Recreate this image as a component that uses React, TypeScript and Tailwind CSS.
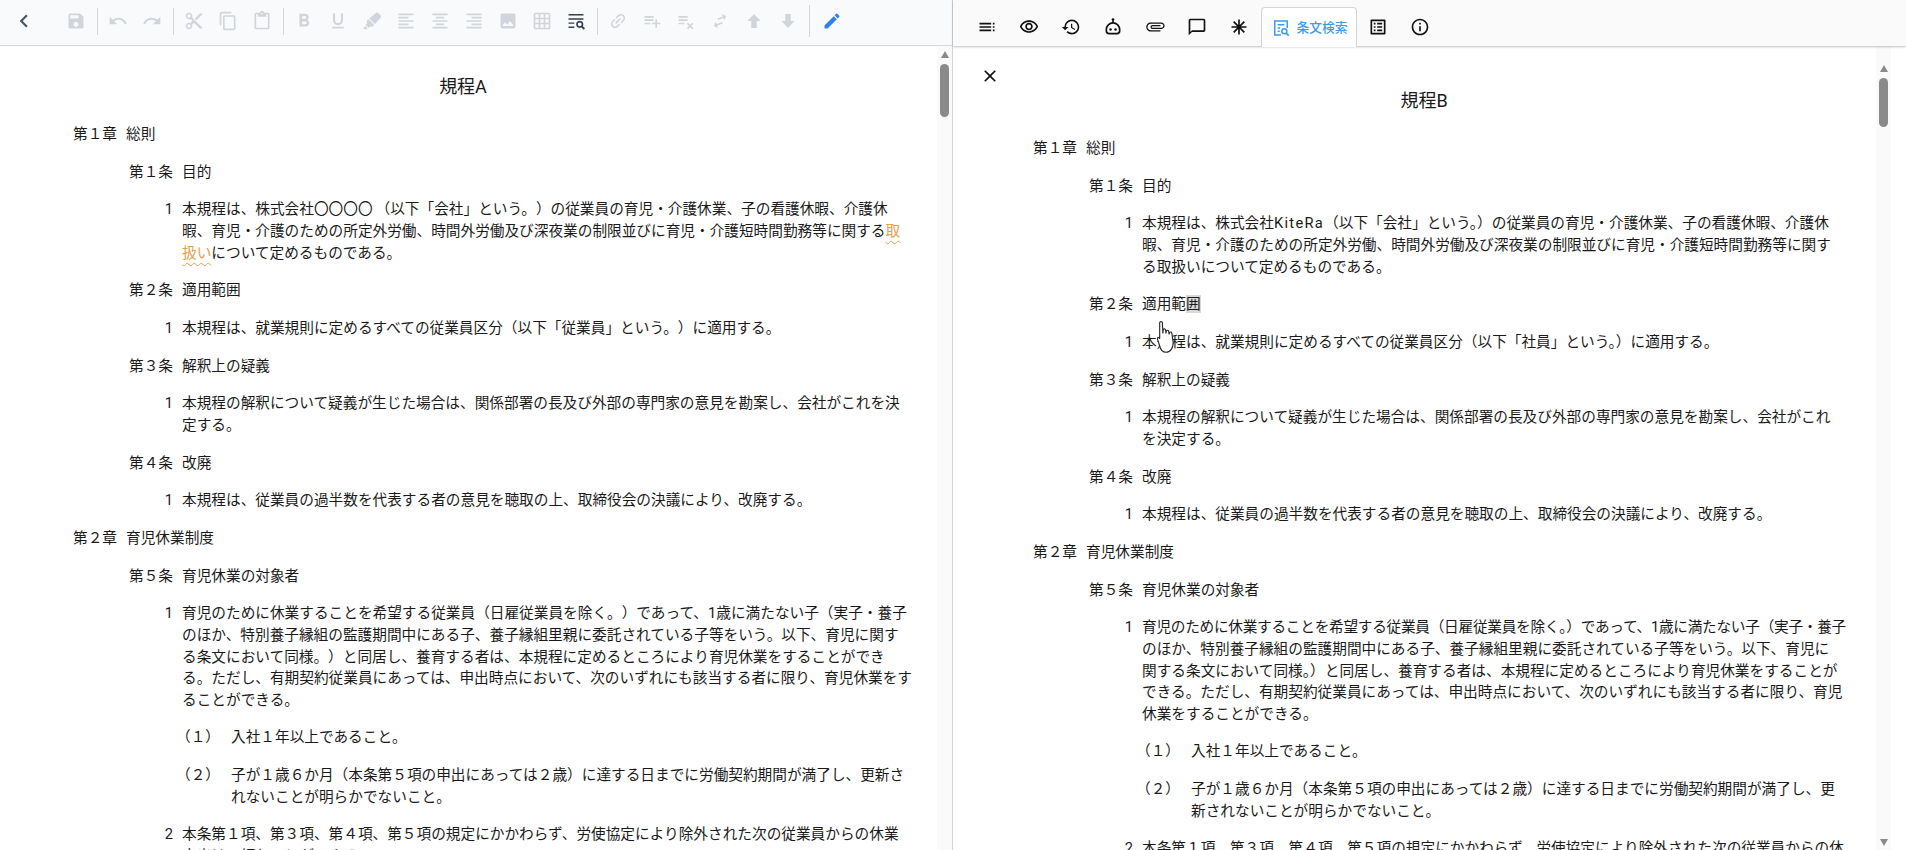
import type { ReactNode } from "react";
import { FaHighlighter } from "react-icons/fa";
import {
  MdChevronLeft,
  MdClose,
  MdContentCopy,
  MdContentCut,
  MdContentPaste,
  MdEdit,
  MdFormatAlignCenter,
  MdFormatAlignLeft,
  MdFormatAlignRight,
  MdFormatBold,
  MdFormatUnderlined,
  MdGridOn,
  MdHistory,
  MdImage,
  MdInfoOutline,
  MdLink,
  MdListAlt,
  MdOutlineAttachment,
  MdOutlineChatBubbleOutline,
  MdOutlineVisibility,
  MdPlaylistAdd,
  MdPlaylistRemove,
  MdRedo,
  MdSave,
  MdSwapHoriz,
  MdToc,
  MdUndo,
} from "react-icons/md";

type Block =
  | { kind: "chapter" | "article"; label: string; text: ReactNode }
  | { kind: "para" | "sub"; label: string; lines: ReactNode[] };

const SQUIGGLE =
  "underline decoration-wavy decoration-1 underline-offset-[4px] [text-decoration-skip-ink:none] decoration-[#e8a04c] text-[#e8a04c]";

const DOC_A: Block[] = [
  { kind: "chapter", label: "第１章", text: "総則" },
  { kind: "article", label: "第１条", text: "目的" },
  {
    kind: "para",
    label: "1",
    lines: [
      <>
        本規程は、株式会社〇〇〇〇<span className="ml-[3px]">（以下「会社」という。）の従業員の育児・介護休業、子の看護休暇、介護休</span>
      </>,
      <>
        暇、育児・介護のための所定外労働、時間外労働及び深夜業の制限並びに育児・介護短時間勤務等に関する<span className={SQUIGGLE}>取</span>
      </>,
      <>
        <span className={SQUIGGLE}>扱い</span>について定めるものである。
      </>,
    ],
  },
  { kind: "article", label: "第２条", text: "適用範囲" },
  { kind: "para", label: "1", lines: ["本規程は、就業規則に定めるすべての従業員区分（以下「従業員」という。）に適用する。"] },
  { kind: "article", label: "第３条", text: "解釈上の疑義" },
  {
    kind: "para",
    label: "1",
    lines: ["本規程の解釈について疑義が生じた場合は、関係部署の長及び外部の専門家の意見を勘案し、会社がこれを決", "定する。"],
  },
  { kind: "article", label: "第４条", text: "改廃" },
  { kind: "para", label: "1", lines: ["本規程は、従業員の過半数を代表する者の意見を聴取の上、取締役会の決議により、改廃する。"] },
  { kind: "chapter", label: "第２章", text: "育児休業制度" },
  { kind: "article", label: "第５条", text: "育児休業の対象者" },
  {
    kind: "para",
    label: "1",
    lines: [
      "育児のために休業することを希望する従業員（日雇従業員を除く。）であって、1歳に満たない子（実子・養子",
      "のほか、特別養子縁組の監護期間中にある子、養子縁組里親に委託されている子等をいう。以下、育児に関す",
      "る条文において同様。）と同居し、養育する者は、本規程に定めるところにより育児休業をすることができ",
      "る。ただし、有期契約従業員にあっては、申出時点において、次のいずれにも該当する者に限り、育児休業をす",
      "ることができる。",
    ],
  },
  { kind: "sub", label: "（１）", lines: ["入社１年以上であること。"] },
  {
    kind: "sub",
    label: "（２）",
    lines: ["子が１歳６か月（本条第５項の申出にあっては２歳）に達する日までに労働契約期間が満了し、更新さ", "れないことが明らかでないこと。"],
  },
  {
    kind: "para",
    label: "2",
    lines: ["本条第１項、第３項、第４項、第５項の規定にかかわらず、労使協定により除外された次の従業員からの休業", "申出は、拒むことができる。"],
  },
];

const DOC_B: Block[] = [
  { kind: "chapter", label: "第１章", text: "総則" },
  { kind: "article", label: "第１条", text: "目的" },
  {
    kind: "para",
    label: "1",
    lines: [
      <>
        本規程は、株式会社<span className="tracking-[1.3px]">KiteRa</span>（以下「会社」という。）の従業員の育児・介護休業、子の看護休暇、介護休
      </>,
      "暇、育児・介護のための所定外労働、時間外労働及び深夜業の制限並びに育児・介護短時間勤務等に関す",
      "る取扱いについて定めるものである。",
    ],
  },
  {
    kind: "article",
    label: "第２条",
    text: (
      <>
        適用範<span className="bg-[#d9d9d9]">囲</span>
      </>
    ),
  },
  { kind: "para", label: "1", lines: ["本規程は、就業規則に定めるすべての従業員区分（以下「社員」という。）に適用する。"] },
  { kind: "article", label: "第３条", text: "解釈上の疑義" },
  {
    kind: "para",
    label: "1",
    lines: ["本規程の解釈について疑義が生じた場合は、関係部署の長及び外部の専門家の意見を勘案し、会社がこれ", "を決定する。"],
  },
  { kind: "article", label: "第４条", text: "改廃" },
  { kind: "para", label: "1", lines: ["本規程は、従業員の過半数を代表する者の意見を聴取の上、取締役会の決議により、改廃する。"] },
  { kind: "chapter", label: "第２章", text: "育児休業制度" },
  { kind: "article", label: "第５条", text: "育児休業の対象者" },
  {
    kind: "para",
    label: "1",
    lines: [
      <span className="tracking-[-0.27px]">育児のために休業することを希望する従業員（日雇従業員を除く。）であって、1歳に満たない子（実子・養子</span>,
      "のほか、特別養子縁組の監護期間中にある子、養子縁組里親に委託されている子等をいう。以下、育児に",
      "関する条文において同様。）と同居し、養育する者は、本規程に定めるところにより育児休業をすることが",
      "できる。ただし、有期契約従業員にあっては、申出時点において、次のいずれにも該当する者に限り、育児",
      "休業をすることができる。",
    ],
  },
  { kind: "sub", label: "（１）", lines: ["入社１年以上であること。"] },
  {
    kind: "sub",
    label: "（２）",
    lines: ["子が１歳６か月（本条第５項の申出にあっては２歳）に達する日までに労働契約期間が満了し、更", "新されないことが明らかでないこと。"],
  },
  {
    kind: "para",
    label: "2",
    lines: ["本条第１項、第３項、第４項、第５項の規定にかかわらず、労使協定により除外された次の従業員からの休", "業申出は、拒むことができる。"],
  },
];

function DocBlock({ block }: { block: Block }) {
  if (block.kind === "chapter") {
    return (
      <div className="flex mb-[16.1px] whitespace-nowrap">
        <span className="w-[53px]">{block.label}</span>
        <span>{block.text}</span>
      </div>
    );
  }
  if (block.kind === "article") {
    return (
      <div className="flex mb-[16.1px] pl-14 whitespace-nowrap">
        <span className="w-[53px]">{block.label}</span>
        <span>{block.text}</span>
      </div>
    );
  }
  if (block.kind === "para") {
    return (
      <div className="flex mb-[16.1px] whitespace-nowrap">
        <span className="w-[100px] text-right">{block.label}</span>
        <div className="pl-[9px]">
          {block.lines.map((l, i) => (
            <div key={i}>{l}</div>
          ))}
        </div>
      </div>
    );
  }
  return (
    <div className="flex mb-[16.1px] whitespace-nowrap">
      <span className="w-[158px] pl-[103px]">{block.label}</span>
      <div>
        {block.lines.map((l, i) => (
          <div key={i}>{l}</div>
        ))}
      </div>
    </div>
  );
}

function Scrollbar({ arrowTop, thumb, down }: { arrowTop: string; thumb: string; down?: boolean }) {
  return (
    <div className="w-[15px] shrink-0 h-full bg-[#fafafa] flex flex-col items-center">
      <div className={`w-0 h-0 border-x-[4.5px] border-x-transparent border-b-[7px] border-b-[#8a8a8a] ${arrowTop}`} />
      <div className={`w-[9px] mt-[6px] rounded-full bg-[#8a8a8a] ${thumb}`} />
      {down && <div className="mt-auto mb-[4px] w-0 h-0 border-x-[4.5px] border-x-transparent border-t-[7px] border-t-[#8a8a8a]" />}
    </div>
  );
}

function ToolIcon({ children, className }: { children: ReactNode; className?: string }) {
  return <div className={`w-[34px] h-[34px] flex items-center justify-center ${className ?? "text-[#d1d5db]"}`}>{children}</div>;
}

function Sep({ tall }: { tall?: boolean }) {
  return (
    <div className="w-[8px] flex justify-center">
      <span className={`w-px bg-[#d4d6da] ${tall ? "h-[32px]" : "h-[27px]"}`} />
    </div>
  );
}

function BlockArrow({ down }: { down?: boolean }) {
  return (
    <svg viewBox="0 0 24 24" width={20} height={20} fill="currentColor" className={down ? "rotate-180" : ""}>
      <path d="M12 3.5 20 12h-4.7v8.5H8.7V12H4z" />
    </svg>
  );
}

function SearchLines() {
  return (
    <svg viewBox="0 0 24 24" width={20} height={20} fill="none" stroke="currentColor" strokeWidth="1.7">
      <path d="M3 4.5h18M3 9.5h18M3 14.5h7M3 19.5h7" />
      <circle cx="16.5" cy="16" r="3.3" strokeWidth="2" />
      <path d="m19 18.6 3 3" strokeWidth="2.2" />
    </svg>
  );
}

function LeftToolbar() {
  const size = "w-[20px] h-[20px]";
  return (
    <div className="h-[46px] shrink-0 bg-[#f9fafb] border-b border-[#d4d6da] flex items-center pb-[3px] pl-[7px]">
      <ToolIcon className="text-[#4b5563] mr-[18px]">
        <MdChevronLeft className="w-[26px] h-[26px]" />
      </ToolIcon>
      <ToolIcon><MdSave className={size} /></ToolIcon>
      <Sep />
      <ToolIcon><MdUndo className={size} /></ToolIcon>
      <ToolIcon><MdRedo className={size} /></ToolIcon>
      <Sep />
      <ToolIcon><MdContentCut className={size} /></ToolIcon>
      <ToolIcon><MdContentCopy className={size} /></ToolIcon>
      <ToolIcon><MdContentPaste className={size} /></ToolIcon>
      <Sep />
      <ToolIcon><MdFormatBold className="w-[22px] h-[22px]" /></ToolIcon>
      <ToolIcon><MdFormatUnderlined className={size} /></ToolIcon>
      <ToolIcon><FaHighlighter className="w-[18px] h-[18px]" /></ToolIcon>
      <ToolIcon><MdFormatAlignLeft className={size} /></ToolIcon>
      <ToolIcon><MdFormatAlignCenter className={size} /></ToolIcon>
      <ToolIcon><MdFormatAlignRight className={size} /></ToolIcon>
      <ToolIcon><MdImage className={size} /></ToolIcon>
      <ToolIcon><MdGridOn className={size} /></ToolIcon>
      <ToolIcon className="text-[#374151]"><SearchLines /></ToolIcon>
      <Sep />
      <ToolIcon><MdLink className={`${size} -rotate-45`} /></ToolIcon>
      <ToolIcon><MdPlaylistAdd className={size} /></ToolIcon>
      <ToolIcon><MdPlaylistRemove className={size} /></ToolIcon>
      <ToolIcon><MdSwapHoriz className={`${size} -rotate-[20deg]`} /></ToolIcon>
      <ToolIcon><BlockArrow /></ToolIcon>
      <ToolIcon><BlockArrow down /></ToolIcon>
      <Sep tall />
      <ToolIcon className="text-[#2f80ed] ml-[2px]"><MdEdit className={size} /></ToolIcon>
    </div>
  );
}

function RobotIcon() {
  return (
    <svg viewBox="0 0 24 24" width={20} height={20} fill="none" stroke="currentColor" strokeWidth="2">
      <circle cx="12" cy="3" r="1.6" fill="currentColor" stroke="none" />
      <path d="M12 4v3" />
      <path d="M4 16.5v-1.5a8 8 0 0 1 16 0v1.500a3.500 3.500 0 0 1-3.500 3.500h-9a3.500 3.500 0 0 1-3.500-3.500z" />
      <circle cx="9" cy="15" r="1.5" fill="currentColor" stroke="none" />
      <circle cx="15" cy="15" r="1.5" fill="currentColor" stroke="none" />
    </svg>
  );
}

function StarIcon() {
  return (
    <svg viewBox="0 0 24 24" width={20} height={20} fill="none" stroke="currentColor" strokeWidth="2">
      <path d="M12 3v18M3 12h18M5.600 5.600l12.800 12.800M18.400 5.600 5.600 18.400" />
    </svg>
  );
}

function FindIcon() {
  return (
    <svg viewBox="0 0 24 24" width={20} height={20} fill="none" stroke="currentColor" strokeWidth="1.8">
      <path d="M12 20.500H4.500v-17h15V12" />
      <path d="M8 8h8M8 12h3M8 16h2.500" />
      <circle cx="16" cy="16" r="3" />
      <path d="m18.200 18.200 3 3" strokeWidth="2" />
    </svg>
  );
}

function RightToolbar() {
  const box = "w-[42px] h-[39px] flex items-center justify-center text-[#111]";
  const size = "w-[20px] h-[20px]";
  return (
    <div className="h-[46px] shrink-0 bg-[#fafafa] shadow-[0_1px_2px_rgba(0,0,0,0.25)] flex items-end pl-[13px] relative z-10">
      <div className={box}><MdToc className={size} /></div>
      <div className={box}><MdOutlineVisibility className={size} /></div>
      <div className={box}><MdHistory className={size} /></div>
      <div className={box}><RobotIcon /></div>
      <div className={box}><MdOutlineAttachment className={size} /></div>
      <div className={box}><MdOutlineChatBubbleOutline className={size} /></div>
      <div className={box}><StarIcon /></div>
      <div className="ml-[1px] w-[96px] h-[40px] -mb-px bg-white border border-b-0 border-[#d4d6da] rounded-t flex items-center justify-center gap-[6px] text-[#3b9bf0] text-[12.75px] font-medium">
        <FindIcon />
        <span>条文検索</span>
      </div>
      <div className={box}><MdListAlt className={size} /></div>
      <div className={box}><MdInfoOutline className={size} /></div>
    </div>
  );
}

export default function App() {
  return (
    <div className="relative h-[850px] w-[1906px] overflow-hidden flex bg-white text-[#1a1a1a] text-[14.667px] leading-[21.6px] font-['Roboto','Noto_Sans_CJK_JP',sans-serif]">
      <div className="w-[952px] shrink-0 flex flex-col h-full">
        <LeftToolbar />
        <div className="flex flex-1 min-h-0">
          <div className="flex-1 min-w-0 overflow-hidden pl-[73px] pt-[29px] [text-spacing-trim:space-all]">
            <div className="w-[780px] text-center text-[18px] leading-[24px] mb-[25px]">規程A</div>
            {DOC_A.map((b, i) => (
              <DocBlock key={i} block={b} />
            ))}
          </div>
          <Scrollbar arrowTop="mt-[5px]" thumb="h-[53px]" />
        </div>
      </div>
      <div className="w-px bg-[#d4d4d4] shrink-0 h-full" />
      <div className="flex-1 flex flex-col h-full min-w-0">
        <RightToolbar />
        <div className="flex flex-1 min-h-0 pr-[15px]">
          <div className="flex-1 min-w-0 overflow-hidden relative pl-[80px] pt-[43px]">
            <MdClose className="absolute left-[27px] top-[20px] w-[20px] h-[20px] text-[#111]" />
            <div className="w-[782px] text-center text-[18px] leading-[24px] mb-[25px]">規程B</div>
            {DOC_B.map((b, i) => (
              <DocBlock key={i} block={b} />
            ))}
          </div>
          <Scrollbar arrowTop="mt-[19px]" thumb="h-[49px]" down />
        </div>
      </div>
      {/* mouse cursor over the right document */}
      <svg viewBox="0 0 20 36" width={18} height={34} className="absolute left-[1157px] top-[320px]" fill="#fff" stroke="#222" strokeWidth="1.2">
        <path d="M3 2C3 .5 6 .5 6 2l.5 12L7 9.500c1-1 2.500-.5 2.500.5l.5 4 .5-3c1-1 2.500-.5 2.500 1l.5 3 .5-2c1-1 2.500-.5 2.500 1L18 24c0 6-3 11-8 11-4 0-6-3-7-7L.5 20c0-2 1.500-2 2.500 0z" />
      </svg>
    </div>
  );
}
